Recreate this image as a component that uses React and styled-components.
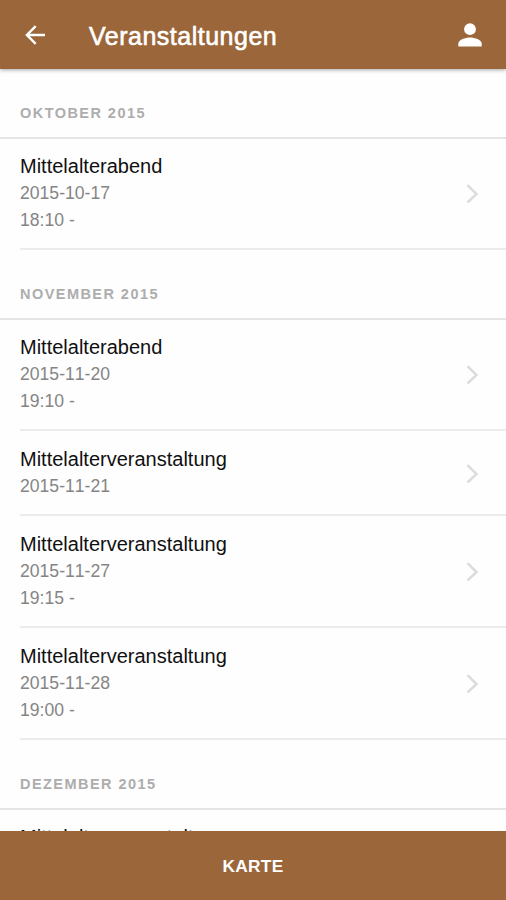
import styled, { createGlobalStyle } from "styled-components";

const GlobalStyle = createGlobalStyle`
  * {
    box-sizing: border-box;
  }
  body {
    margin: 0;
    background-color: #fff;
    font-family: "Liberation Sans", Arial, sans-serif;
  }
`;

const Screen = styled.div`
  display: flex;
  flex-direction: column;
  width: 100vw;
  height: 100vh;
  overflow: hidden;
  background-color: #fefefe;
`;

const Header = styled.header`
  display: flex;
  flex: none;
  align-items: center;
  height: 69px;
  padding: 1px 24px 0 25px;
  background-color: #9a663a;
  color: #fff;
  box-shadow: 0 1px 4px rgba(0, 0, 0, 0.35);
  z-index: 1;
`;

const Title = styled.h1`
  flex: 1;
  margin: 2px 0 0 43px;
  font-size: 25px;
  font-weight: 400;
  line-height: 30px;
  letter-spacing: 0.5px;
  -webkit-text-stroke: 0.6px #fff;
`;

const Icon = styled.svg`
  display: block;
  flex: none;
`;

const List = styled.main`
  flex: 1;
  min-height: 0;
  overflow: hidden;
`;

const MonthTitle = styled.h2`
  height: 69.5px;
  margin: 0;
  padding: 36px 20px 0;
  border-bottom: 2px solid #e5e5e5;
  color: #adadad;
  font-size: 14.5px;
  font-weight: 700;
  line-height: 17px;
  letter-spacing: 1.45px;
  text-transform: uppercase;
`;

const Row = styled.div`
  display: flex;
  align-items: center;
  justify-content: space-between;
  height: ${(props) => (props.$short ? "85.3px" : "112px")};
  margin-left: 20px;
  padding-right: 27px;
  border-bottom: 2px solid #ececec;

  ${MonthTitle} + & {
    height: 111.5px;
  }
`;

const Name = styled.div`
  color: #101010;
  font-size: 20px;
  line-height: 27px;
`;

const Detail = styled.div`
  min-height: 26.7px;
  color: #858585;
  font-size: 17.6px;
  font-kerning: none;
  line-height: 26.7px;
`;

const Footer = styled.button`
  flex: none;
  height: 69px;
  padding: 1px 0 0;
  border: none;
  background-color: #9a663a;
  color: #fff;
  font-family: inherit;
  font-size: 17.3px;
  font-weight: 700;
  letter-spacing: 0.3px;
`;

const months = [
  {
    name: "Oktober 2015",
    events: [{ name: "Mittelalterabend", details: ["2015-10-17", "18:10 -"] }],
  },
  {
    name: "November 2015",
    events: [
      { name: "Mittelalterabend", details: ["2015-11-20", "19:10 -"] },
      { name: "Mittelalterveranstaltung", details: ["2015-11-21"] },
      { name: "Mittelalterveranstaltung", details: ["2015-11-27", "19:15 -"] },
      { name: "Mittelalterveranstaltung", details: ["2015-11-28", "19:00 -"] },
    ],
  },
  {
    name: "Dezember 2015",
    events: [{ name: "Mittelalterveranstaltung", details: ["", ""] }],
  },
];

function BackIcon() {
  return (
    <Icon width="21" height="20" viewBox="0 0 21 20" fill="none">
      <path
        d="M20 10H2M10.7 1.2L1.9 10L10.7 18.8"
        stroke="#fff"
        strokeWidth="2.4"
      />
    </Icon>
  );
}

function PersonIcon() {
  return (
    <Icon width="24" height="24" viewBox="0 0 24 24" fill="#fff">
      <circle cx="12" cy="6.2" r="5.9" />
      <path d="M0.3 23.5V20.8C0.3 16.8 7.5 14.6 12 14.6S23.7 16.8 23.7 20.8V23.5Z" />
    </Icon>
  );
}

function Chevron() {
  return (
    <Icon width="13" height="20" viewBox="0 0 13 20" fill="none">
      <path d="M1.5 2.2L10.5 11L1.5 19.5" stroke="#dcdcdc" strokeWidth="2.5" />
    </Icon>
  );
}

function App() {
  const renderEvent = (event, i) => {
    return (
      <Row key={i} $short={event.details.length === 1}>
        <div>
          <Name>{event.name}</Name>
          {event.details.map((detail, n) => (
            <Detail key={n}>{detail}</Detail>
          ))}
        </div>
        <Chevron />
      </Row>
    );
  };

  return (
    <Screen>
      <GlobalStyle />
      <Header>
        <BackIcon />
        <Title>Veranstaltungen</Title>
        <PersonIcon />
      </Header>
      <List>
        {months.map((month) => (
          <section key={month.name}>
            <MonthTitle>{month.name}</MonthTitle>
            {month.events.map(renderEvent)}
          </section>
        ))}
      </List>
      <Footer>KARTE</Footer>
    </Screen>
  );
}

export default App;
